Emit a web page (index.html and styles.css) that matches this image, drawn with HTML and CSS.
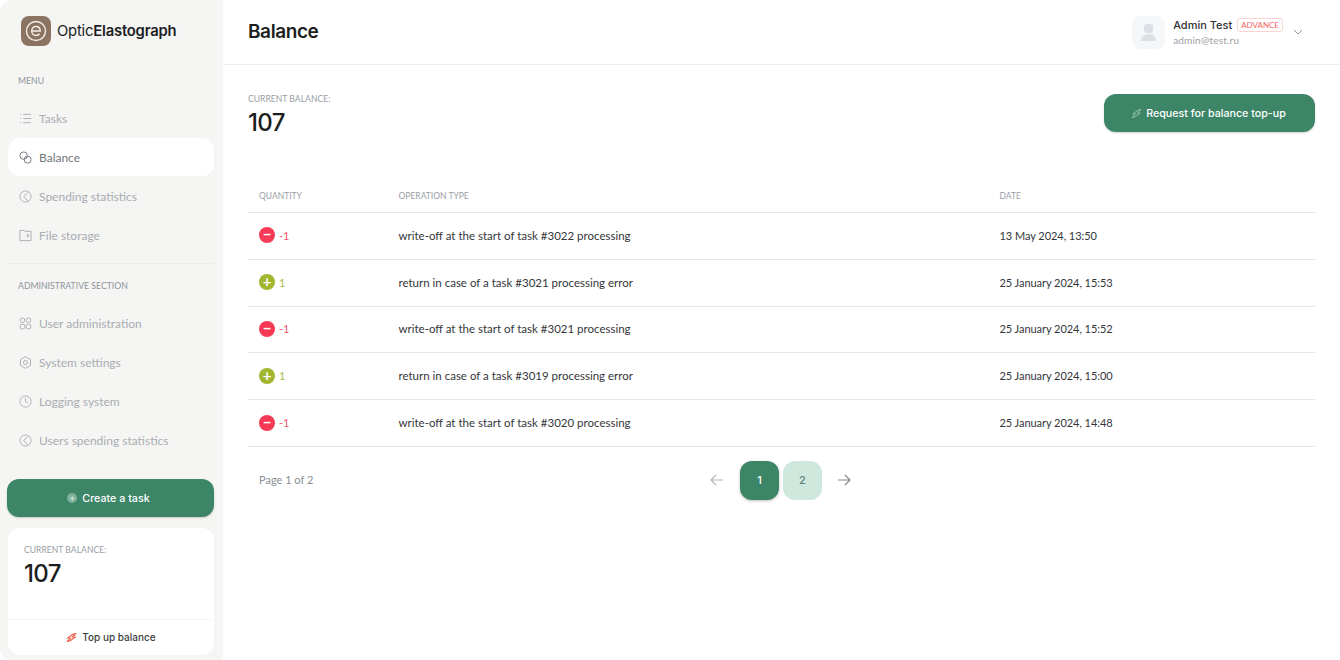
FILE: index.html
```html
<!DOCTYPE html>
<html lang="en">
<head>
<meta charset="utf-8">
<title>Balance</title>
<link rel="stylesheet" href="styles.css">
</head>
<body>
<div class="app">
  <aside class="sidebar">
    <div class="logo">
      <span class="logo-mark"><svg viewBox="0 0 30 30" width="30" height="30"><circle cx="15" cy="15" r="9.500" fill="none" stroke="#f3ece6" stroke-width="1.400"/><path d="M10.800 15h8.400c0-2.600-1.800-4.400-4.200-4.400s-4.300 1.900-4.300 4.400 1.900 4.400 4.400 4.400c1.500 0 2.700-.6 3.500-1.600" fill="none" stroke="#f3ece6" stroke-width="1.500"/></svg></span>
      <span class="logo-text">Optic<b>Elastograph</b></span>
    </div>
    <div class="section-label label-menu">MENU</div>
    <nav class="nav">
      <a class="nav-item"><svg class="ico" viewBox="0 0 14 14"><path d="M1 2.500h1M1 7h1M1 11.500h1M4.500 2.500H13M4.500 7H13M4.500 11.500H13"/></svg>Tasks</a>
      <a class="nav-item active"><svg class="ico" viewBox="0 0 14 14"><circle cx="5" cy="5" r="4"/><circle cx="9.300" cy="9.300" r="3.800"/></svg>Balance</a>
      <a class="nav-item"><svg class="ico" viewBox="0 0 14 14"><circle cx="7" cy="7" r="6"/><path d="M10 2.500 5 7l4.500 4.700"/></svg>Spending statistics</a>
      <a class="nav-item"><svg class="ico" viewBox="0 0 14 14"><path d="M1 3.500v9h12V2.500H6.500L5.500 1.500H1zM9.500 4.500v4M7.800 7l1.700 1.700L11.200 7"/></svg>File storage</a>
    </nav>
    <div class="side-divider"></div>
    <div class="section-label label-admin">ADMINISTRATIVE SECTION</div>
    <nav class="nav">
      <a class="nav-item"><svg class="ico" viewBox="0 0 14 14"><circle cx="3.800" cy="3.500" r="2.500"/><circle cx="10.200" cy="3.500" r="2.500"/><rect x="1.300" y="7.800" width="5" height="5" rx="1.800"/><rect x="7.700" y="7.800" width="5" height="5" rx="1.800"/></svg>User administration</a>
      <a class="nav-item"><svg class="ico" viewBox="0 0 14 14"><path d="M7 .700l5.400 3.100v6.400L7 13.300l-5.400-3.100V3.800z"/><circle cx="7" cy="7" r="2.200"/></svg>System settings</a>
      <a class="nav-item"><svg class="ico" viewBox="0 0 14 14"><circle cx="7" cy="7" r="6"/><path d="M7 3.500V7l2.500 1.500"/></svg>Logging system</a>
      <a class="nav-item"><svg class="ico" viewBox="0 0 14 14"><circle cx="7" cy="7" r="6"/><path d="M10 2.500 5 7l4.500 4.700"/></svg>Users spending statistics</a>
    </nav>
    <button class="btn btn-create"><span class="plus-dot">+</span>Create a task</button>
    <div class="balance-card">
      <div class="balance-body">
        <div class="caption">CURRENT BALANCE:</div>
        <div class="amount">107</div>
      </div>
      <a class="topup"><svg class="bolt" viewBox="0 0 12 12"><path d="M11 1.500 7.500 2.500 2 6.500l3 .2L1 10.500l3.500-1L10 5.500 7 5.300z" fill="none" stroke="#e8523a" stroke-width="1.100"/></svg>Top up balance</a>
    </div>
  </aside>
  <main class="main">
    <header class="topbar">
      <h1>Balance</h1>
      <div class="user">
        <span class="avatar"><svg viewBox="0 0 33 33" width="33" height="33"><rect x="12" y="8" width="9" height="9" rx="3" fill="#dde0e5"/><path d="M9 25c0-5 3.500-7 7.500-7s7.500 2 7.500 7z" fill="#dde0e5"/></svg></span>
        <div class="user-info">
          <div class="user-line"><span class="user-name">Admin Test</span><span class="badge">ADVANCE</span></div>
          <div class="user-mail">admin@test.ru</div>
        </div>
        <svg class="chev" viewBox="0 0 10 6" width="10" height="6"><path d="M1 1l4 4 4-4" fill="none" stroke="#8e939a" stroke-width="1"/></svg>
      </div>
    </header>
    <section class="content">
      <div class="summary">
        <div>
          <div class="caption">CURRENT BALANCE:</div>
          <div class="amount">107</div>
        </div>
        <button class="btn btn-request"><svg class="bolt" viewBox="0 0 12 12"><path d="M11 1.500 7.500 2.500 2 6.500l3 .2L1 10.500l3.500-1L10 5.500 7 5.300z" fill="none" stroke="#9cc6b0" stroke-width="1"/></svg>Request for balance top-up</button>
      </div>
      <div class="table">
        <div class="row head"><span>QUANTITY</span><span>OPERATION TYPE</span><span>DATE</span></div>
        <div class="row"><span class="qty neg"><i class="dot">&minus;</i>-1</span><span>write-off at the start of task #3022 processing</span><span class="date">13 May 2024, 13:50</span></div>
        <div class="row"><span class="qty pos"><i class="dot">+</i>1</span><span>return in case of a task #3021 processing error</span><span class="date">25 January 2024, 15:53</span></div>
        <div class="row"><span class="qty neg"><i class="dot">&minus;</i>-1</span><span>write-off at the start of task #3021 processing</span><span class="date">25 January 2024, 15:52</span></div>
        <div class="row"><span class="qty pos"><i class="dot">+</i>1</span><span>return in case of a task #3019 processing error</span><span class="date">25 January 2024, 15:00</span></div>
        <div class="row"><span class="qty neg"><i class="dot">&minus;</i>-1</span><span>write-off at the start of task #3020 processing</span><span class="date">25 January 2024, 14:48</span></div>
      </div>
      <div class="pager">
        <span class="page-of">Page 1 of 2</span>
        <div class="pages">
          <svg class="arrow prev" viewBox="0 0 14 12" width="14" height="12"><path d="M13 6H1M6 1 1 6l5 5"/></svg>
          <span class="page current">1</span>
          <span class="page">2</span>
          <svg class="arrow next" viewBox="0 0 14 12" width="14" height="12"><path d="M1 6h12M8 1l5 5-5 5"/></svg>
        </div>
      </div>
    </section>
  </main>
</div>
</body>
</html>
```
FILE: styles.css
```css
* { box-sizing: border-box; }
html, body { margin: 0; height: 100%; }
body { background: #fff; font-family: "Lato", "Liberation Sans", sans-serif; color: #2b2d30; overflow: hidden; }
.app { display: flex; width: 1340px; height: 660px; }

.sidebar { width: 223px; flex: none; height: 660px; background: #f5f5f3; border-radius: 12px 0 0 12px; padding: 16px 9px 5px 7px; display: flex; flex-direction: column; }
.logo { display: flex; align-items: center; gap: 6px; padding-left: 14px; height: 30px; flex: none; }
.logo-mark { width: 30px; height: 30px; border-radius: 8px; background: #8b7361; display: block; }
.logo-mark svg { display: block; }
.logo-text { font-size: 14.800px; color: #1c1d1f; font-family: "Inter", sans-serif; letter-spacing: -.2px; }
.logo-text b { font-weight: 600; }
.section-label { font-size: 8.700px; color: #8f949b; padding-left: 11px; line-height: 12px; flex: none; }
.label-menu { margin-top: 29px; }
.label-admin { margin-top: 16px; }
.nav { display: flex; flex-direction: column; gap: 1px; margin-left: 1px; flex: none; }
.label-menu + .nav { margin-top: 12px; }
.label-admin + .nav { margin-top: 12px; }
.nav-item { height: 38px; display: flex; align-items: center; gap: 7px; padding-left: 11px; font-size: 12px; color: #a9adb2; border-radius: 12px; }
.nav-item.active { background: #fff; color: #70757b; }
.ico { width: 13px; height: 13px; fill: none; stroke: #a9adb2; stroke-width: 1; flex: none; }
.active .ico { stroke: #70757b; }
.side-divider { height: 1px; background: #ecece9; margin: 9px 0 0 1px; flex: none; }

.btn { border: 0; background: #3c8567; color: #fff; font-family: "Inter", sans-serif; font-weight: 500; font-size: 10.700px; display: flex; align-items: center; justify-content: center; border-radius: 12px; box-shadow: 0 1px 2px rgba(0,0,0,.18); padding: 0; flex: none; }
.btn-create { height: 38px; width: 207px; margin-top: 20px; gap: 5px; padding-right: 4px; }
.plus-dot { width: 10px; height: 10px; border-radius: 50%; background: #7fb19b; color: #dfeee7; font-size: 9px; line-height: 10px; text-align: center; }
.balance-card { background: #fff; border-radius: 12px; margin: 11px 0 0 1px; height: 127px; display: flex; flex-direction: column; flex: none; }
.balance-body { flex: 1; padding-top: 17px; padding-left: 16px; }
.caption { font-size: 8.600px; line-height: 11px; color: #9a9ea5; }
.amount { font-family: "Inter", sans-serif; font-size: 24px; line-height: 30px; font-weight: 500; color: #1d1e20; margin-top: 3px; letter-spacing: -.6px; }
.topup { height: 36px; border-top: 1px solid #f5f5f3; display: flex; align-items: center; justify-content: center; gap: 5px; font-family: "Inter", sans-serif; font-size: 10px; color: #3b3d40; font-weight: 500; padding-bottom: 1px; }
.bolt { width: 11px; height: 11px; flex: none; }

.main { flex: 1; min-width: 0; }
.topbar { height: 65px; border-bottom: 1px solid #ebecee; padding: 0 37px 0 25px; display: flex; align-items: center; justify-content: space-between; }
.topbar h1 { margin: 0 0 2px; font-family: "Inter", sans-serif; font-size: 19px; font-weight: 600; color: #1d1e20; letter-spacing: -.4px; }
.user { display: flex; align-items: center; }
.avatar { width: 33px; height: 33px; border-radius: 8px; background: #f6f7f9; margin-right: 8px; display: block; }
.avatar svg { display: block; }
.user-line { display: flex; align-items: center; gap: 5px; }
.user-name { font-family: "Inter", sans-serif; font-size: 11px; font-weight: 500; color: #303236; }
.badge { font-size: 8px; line-height: 12px; color: #f2625f; border: 1px solid #fbd3d0; border-radius: 3px; padding: 0 3px; }
.user-mail { font-size: 10px; color: #9a9ea5; margin-top: 2px; letter-spacing: .2px; }
.chev { margin-left: 10px; }

.content { padding: 29px 25px 0; }
.summary { display: flex; justify-content: space-between; align-items: flex-start; }
.btn-request { width: 211px; height: 38px; gap: 4px; margin-left: auto; padding-right: 2px; }
.table { margin-top: 42px; }
.row { display: grid; grid-template-columns: 139.500px 601px 1fr; align-items: center; height: 46.800px; border-bottom: 1px solid #e6e7e9; font-size: 11.500px; color: #34363a; padding: 0 0 1px 11px; }
.head { height: 33px; font-size: 8.500px; color: #9a9ea5; }
.date { font-size: 11px; letter-spacing: -.05px; }
.qty { display: flex; align-items: center; gap: 4px; font-size: 11px; }
.dot { width: 16px; height: 16px; border-radius: 50%; color: #fff; font-style: normal; font-weight: 700; font-size: 15px; line-height: 15px; text-align: center; }
.neg { color: #f4566e; }
.neg .dot { background: #f53a55; }
.pos { color: #a7b94f; }
.pos .dot { background: #a2b62f; }

.pager { position: relative; display: flex; align-items: center; justify-content: center; height: 39px; margin-top: 14px; padding-right: 2px; }
.page-of { position: absolute; left: 11px; font-size: 11px; color: #8a8e94; top: 12px; }
.pages { display: flex; align-items: center; gap: 4px; }
.page { width: 39px; height: 39px; border-radius: 12px; background: #cfe8de; color: #5d7f71; font-family: "Inter", sans-serif; font-size: 11px; font-weight: 500; display: flex; align-items: center; justify-content: center; }
.page.current { background: #3c8567; color: #fff; box-shadow: 0 1px 3px rgba(0,0,0,.25); }
.arrow { fill: none; stroke-width: 1.200; }
.prev { stroke: #b3b6ba; margin-right: 12px; }
.next { stroke: #85888d; margin-left: 11px; }
```
